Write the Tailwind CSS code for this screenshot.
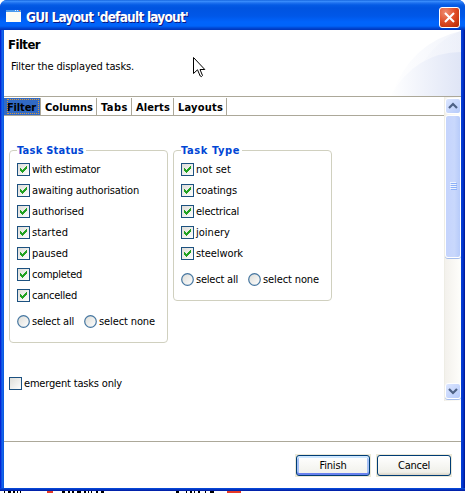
<!DOCTYPE html>
<html lang="en"><head><meta charset="utf-8"><title>GUI Layout</title>
<script src="https://cdn.jsdelivr.net/npm/@tailwindcss/browser@4"></script></head>
<body class="relative w-[465px] h-[493px] overflow-hidden bg-white text-black text-[11px] leading-[13px] font-['DejaVu_Sans_Condensed','DejaVu_Sans',sans-serif] font-stretch-condensed">
<svg width="0" height="0" class="absolute"><defs>
<linearGradient id="cb" x1="0" y1="0" x2="1" y2="1"><stop stop-color="#dcdcd7"/><stop offset="1" stop-color="#fff"/></linearGradient>
<symbol id="box" viewBox="0 0 13 13"><rect x=".5" y=".5" width="12" height="12" fill="url(#cb)" stroke="#1c5180"/></symbol>
<symbol id="check" viewBox="0 0 13 13"><use href="#box"/><path d="M3 5h1v1h1v1h1v-1h1v-1h1v-1h1v-1h1v3h-1v1h-1v1h-1v1h-1v1h-1v-1h-1v-1h-1z" fill="#21a121"/></symbol>
<symbol id="radio" viewBox="0 0 13 13"><circle cx="6.5" cy="6.5" r="5.8" fill="url(#cb)" stroke="#4576a0" stroke-width="1.2"/></symbol>
</defs></svg>
<div class="flex flex-col w-[465px] h-[491px] overflow-hidden rounded-t-[7px] bg-[linear-gradient(90deg,#0019cf_0,#0831d9_1px,#166aee_2px,#0855dd_4px,#0855dd_460px,#0441d8_461px,#0033cc_463px,#001590_465px)]">
 <div class="flex shrink-0 items-center h-[30px] pl-[6px] pr-[5px] pt-[3px] bg-[linear-gradient(#0453d2_0,#3f93ff_1px,#1d70ee_3px,#045be5_5px,#0054e0_8px,#0057e8_16px,#0064fc_22px,#0064fa_26px,#0048d4_28px,#0034b8_30px)]">
  <svg width="15" height="12" class="shrink-0 mb-[1px]" shape-rendering="crispEdges"><rect width="15" height="12" fill="#fdfcf4"/><rect width="15" height="2" fill="#4c9aee"/><path d="M9 0h1v1h-1zM11 0h1v1h-1z" fill="#d9ecff"/><path d="M13 0h1v1h-1z" fill="#f0642c"/></svg>
  <div class="ml-[5px] flex-1 whitespace-nowrap text-white font-bold text-[13.5px] leading-[18px] [text-shadow:1px_1px_0_#0a1883]"><span data-w="162">GUI Layout 'default layout'</span></div>
  <svg width="21" height="21" class="mt-[1px] mr-0" viewBox="0 0 21 21"><defs><radialGradient id="cl" cx=".3" cy=".25" r=".9"><stop stop-color="#ee8b70"/><stop offset=".55" stop-color="#df4c25"/><stop offset="1" stop-color="#bd2d05"/></radialGradient></defs><rect x=".5" y=".5" width="20" height="20" rx="2.5" fill="url(#cl)" stroke="#fff"/><path d="M6 6l9 9M15 6l-9 9" stroke="#fff" stroke-width="2.1"/></svg>
 </div>
 <div class="flex flex-col mx-[4px] w-[457px] h-[458px] bg-white">
  <header class="flex shrink-0 h-[67px] border-b border-[#aca899]">
   <div class="flex-1 pl-[4px] pt-[7px]">
    <h1 class="font-bold text-[13px] leading-[16px]"><span data-w="32">Filter</span></h1>
    <p class="pl-[3px] mt-[7px]"><span data-w="123">Filter the displayed tasks.</span></p>
   </div>
   <svg width="74" height="66" viewBox="0 0 74 66"><defs><linearGradient id="h1"><stop stop-color="#fff"/><stop offset="1" stop-color="#e8ecf8"/></linearGradient><linearGradient id="h2"><stop stop-color="#fff"/><stop offset="1" stop-color="#dfe5f6"/></linearGradient></defs><path d="M4 66Q24 12 74 1V66z" fill="url(#h1)" opacity=".6"/><path d="M34 36Q49 10 74 1V66H4z" fill="url(#h1)" opacity=".5"/><path d="M3 66Q29 22 74 22V66z" fill="url(#h2)"/></svg>
  </header>
  <main class="flex shrink-0 h-[344px]">
   <div class="w-[440px] flex flex-col">
    <nav class="flex h-[19px] pt-[1px] border-b border-[#aca899] font-bold leading-[19px]">
     <div class="w-[37px] h-[17px] border-r border-[#aca899] bg-[#316ac5] flex pt-[1px] pl-[3px] pr-[1px]"><div class="w-[32px] h-[15px] border border-dotted border-[#dc9838] leading-[16px]"><span class="-ml-px" data-w="29">Filter</span></div></div>
     <div class="w-[56px] border-r border-[#aca899] pl-[4px]"><span data-w="48">Columns</span></div>
     <div class="w-[35px] border-r border-[#aca899] pl-[4px]"><span data-w="27">Tabs</span></div>
     <div class="w-[42px] border-r border-[#aca899] pl-[4px]"><span data-w="34">Alerts</span></div>
     <div class="w-[53px] border-r border-[#aca899] pl-[4px]"><span data-w="45">Layouts</span></div>
    </nav>
    <div class="flex items-start gap-[5px] pl-[5px] pt-[28px] h-[233px]">
     <fieldset class="w-[159px] h-[199px] border border-[#d0d0bf] rounded-[4px] px-[7px] pt-[7px]" id="status"><legend class="h-[12px] pr-[2px] font-bold text-[#0046d5] leading-[13px]"><span data-w="67">Task Status</span></legend></fieldset>
     <fieldset class="w-[159px] h-[157px] border border-[#d0d0bf] rounded-[4px] px-[7px] pt-[7px]" id="type"><legend class="h-[12px] pr-[2px] font-bold text-[#0046d5] leading-[13px]"><span data-w="59">Task Type</span></legend></fieldset>
    </div>
    <label class="flex items-center pl-[5px] mt-[28px] h-[13px]"><svg width="13" height="13"><use href="#box"/></svg><span class="ml-[2px]" data-w="98">emergent tasks only</span></label>
   </div>
   <div class="w-[17px] h-[304px] border-l border-[#eeede5] bg-[linear-gradient(90deg,#f3f1ec,#fefefb)] flex flex-col pt-[1px]">
    <div class="h-[16px] w-[16px] shrink-0 border border-white rounded-[3px] bg-[linear-gradient(135deg,#dce6ff,#b5cafa)]"><svg width="14" height="14" viewBox="0 0 14 14"><path d="M3 9L7 5L11 9" fill="none" stroke="#4d6185" stroke-width="2.2"/></svg></div>
    <div class="mt-[1px] h-[143px] w-[16px] shrink-0 border border-white shadow-[0_1px_0_#a5bdec] rounded-[3px] bg-[linear-gradient(90deg,#c5d4fd,#c9d8fc_60%,#b7cbfa)] flex justify-center pt-[66px]"><svg width="7" height="9" shape-rendering="crispEdges"><path d="M0 .5h6M0 2.5h6M0 4.5h6M0 6.5h6" stroke="#eef4fe"/><path d="M1 1.5h6M1 3.5h6M1 5.5h6M1 7.5h6" stroke="#8cb0f8"/></svg></div>
    <div class="mt-auto mb-[2px] h-[16px] w-[16px] shrink-0 border border-white shadow-[0_1px_0_#a5bdec] rounded-[3px] bg-[linear-gradient(135deg,#dce6ff,#b5cafa)]"><svg width="14" height="14" viewBox="0 0 14 14"><path d="M3 5L7 9L11 5" fill="none" stroke="#4d6185" stroke-width="2.2"/></svg></div>
   </div>
  </main>
  <footer class="flex-1 border-t border-[#aca899] flex justify-end gap-[5px] pr-[9px] pt-[12px]">
   <div class="w-[76px] h-[23px] p-[1px] bg-[#ece9d8]"><button class="block w-[74px] h-[21px] border border-[#003c74] rounded-[3px] bg-[linear-gradient(#fff,#f0f0ea)] shadow-[inset_0_2px_0_#cee7ff,inset_0_-2px_0_#6982ee,inset_2px_0_0_#a6c1f5,inset_-2px_0_0_#a6c1f5]"><span data-w="27">Finish</span></button></div>
   <div class="w-[76px] h-[23px] p-[1px] bg-[#ece9d8]"><button class="block w-[74px] h-[21px] border border-[#003c74] rounded-[3px] bg-[linear-gradient(#fff,#f0f0ea_85%,#d8d2c4)]"><span data-w="32">Cancel</span></button></div>
  </footer>
 </div>
 <div class="flex-1 bg-[linear-gradient(#0850e0,#0019a0)]"></div>
</div>
<svg width="465" height="2" class="block" shape-rendering="crispEdges"><path d="M4 1h1M8 1h3M13 1h2M17 1h1M20 1h1M62 1h3M68 1h2M72 1h2M77 1h4M84 1h2M88 1h1M91 1h1M96 1h2M101 1h3M176 1h3M186 1h1M190 1h2M194 1h1M198 1h2M205 1h1M210 1h4" stroke="#000" stroke-width="2"/><path d="M47 1h6M227 1h14" stroke="#e83a28" stroke-width="2"/></svg>
<svg class="absolute left-[193px] top-[57px]" width="13" height="22" viewBox="0 0 13 22"><path d="M.5 .5V16.5L4.5 12.8L7.2 19Q8.5 20.5 9.5 18.5L7 12.5H11.8z" fill="#fff" stroke="#000"/></svg>
<script>
const radios = (w1, w2) => `<div class="flex items-center h-[13px] mt-[13px]"><svg width="13" height="13"><use href="#radio"/></svg><span class="ml-[2px] mr-[10px]" data-w="${w1}">select all</span><svg width="13" height="13"><use href="#radio"/></svg><span class="ml-[2px]" data-w="${w2}">select none</span></div>`;
const group = (id, items) => document.getElementById(id).insertAdjacentHTML('beforeend',
 items.map(([t, w]) => `<label class="flex items-center h-[13px] mb-[8px]"><svg width="13" height="13"><use href="#check"/></svg><span class="ml-[2px]" data-w="${w}">${t}</span></label>`).join('') + radios(42, 56));
group('status', [['with estimator',68],['awaiting authorisation',107],['authorised',52],['started',36],['paused',36],['completed',50],['cancelled',45]]);
group('type', [['not set',35],['coatings',41],['electrical',43],['joinery',34],['steelwork',47]]);
// Space each label's letters so that it takes its nominal width.
const fit = () => document.querySelectorAll('[data-w]').forEach(e => {
 e.style.whiteSpace = 'nowrap';
 e.style.letterSpacing = '0px';
 e.style.letterSpacing = (e.dataset.w - e.getBoundingClientRect().width) / e.textContent.length + 'px';
});
fit();
window.addEventListener('load', () => { fit(); requestAnimationFrame(fit); });
</script>
</body></html>
